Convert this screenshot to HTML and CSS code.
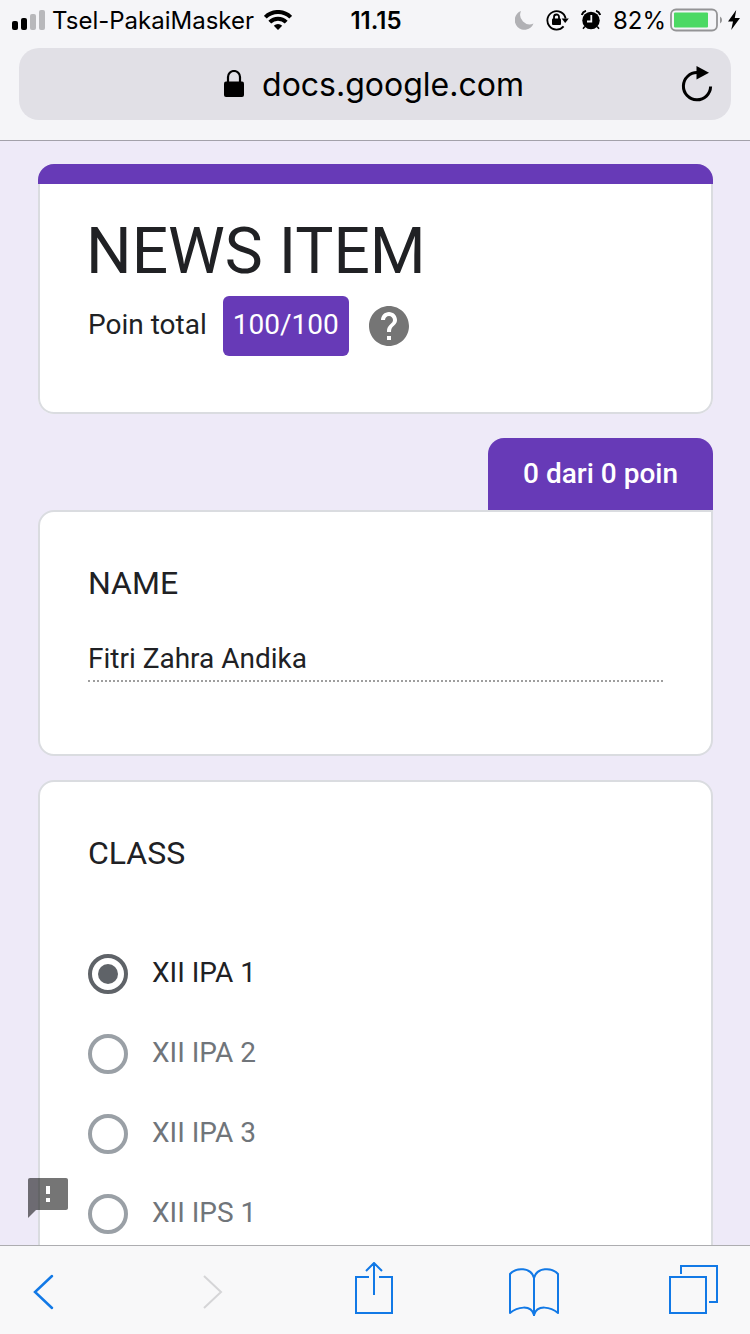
FILE: index.html
```html
<!DOCTYPE html>
<html lang="id">
<head>
    <meta charset="UTF-8">
    <meta name="viewport" content="width=device-width, initial-scale=1.0">
    <title>NEWS ITEM</title>
    <link rel="stylesheet" href="styles.css">
</head>
<body>

    <!-- Browser top bar -->
    <header class="browser-top">
        <div class="status-bar">
            <div class="status-left">
                <svg width="34" height="20" viewBox="0 0 34 20" aria-hidden="true">
                    <rect x="0" y="11" width="6" height="9" rx="2"/>
                    <rect x="9" y="8" width="6" height="12" rx="2"/>
                    <rect x="18" y="4" width="6" height="16" rx="2" fill="#b8b8bb"/>
                    <rect x="27" y="0" width="6" height="20" rx="2" fill="#b8b8bb"/>
                </svg>
                <span class="carrier">Tsel-PakaiMasker</span>
                <svg width="28" height="20" viewBox="0 0 28 20" fill="none" stroke="#000" stroke-width="4" aria-hidden="true">
                    <path d="M1.3 7.2a18 18 0 0 1 25.4 0"/>
                    <path d="M5.8 12.200a11.600 11.600 0 0 1 16.400 0"/>
                    <path d="M14 20l-4.2-4.2a6 6 0 0 1 8.4 0z" fill="#000" stroke="none"/>
                </svg>
            </div>
            <span class="clock">11.15</span>
            <div class="status-right">
                <svg width="19" height="20" viewBox="0 0 19 20" aria-hidden="true">
                    <path d="M6 1A9.7 9.7 0 1 0 18.5 13.5A9.5 9.5 0 0 1 6 1z" fill="#b1b1b5"/>
                </svg>
                <svg width="23" height="22" viewBox="0 0 23 22" fill="none" stroke="#000" stroke-width="1.8" aria-hidden="true">
                    <path d="M17.6 17.3A9.2 9.2 0 1 1 19.6 9.5"/>
                    <path d="M15.6 9.5h7.2l-3.6 4.6z" fill="#000" stroke="none"/>
                    <rect x="6" y="9.5" width="9" height="6.5" rx="1" fill="#000" stroke="none"/>
                    <path d="M8 10V8a2.5 2.5 0 0 1 5 0v2"/>
                </svg>
                <svg width="20" height="20" viewBox="0 0 20 20" aria-hidden="true">
                    <circle cx="10" cy="10.5" r="8.7"/>
                    <path d="M.8 5A6 6 0 0 1 5 .9M19.2 5A6 6 0 0 0 15 .9" fill="none" stroke="#000" stroke-width="2"/>
                    <path d="M3.800 16.500L2 18.800M16.200 16.500l1.800 2.300" stroke="#000" stroke-width="1.500"/>
                    <path d="M10.3 5v6.500H6" fill="none" stroke="#f5f5f8" stroke-width="1.800"/>
                </svg>
                <span class="percent">82%</span>
                <svg class="battery" width="54" height="24" viewBox="0 0 54 24" aria-hidden="true">
                    <rect x="1" y="1.5" width="46" height="21" rx="5" fill="none" stroke="#949496" stroke-width="1.8"/>
                    <rect x="4" y="4.5" width="34" height="15" rx="1" fill="#4cd964"/>
                    <path d="M50 8.5a4 4 0 0 1 0 7z" fill="#949496"/>
                </svg>
                <svg width="12" height="20" viewBox="0 0 12 20" aria-hidden="true">
                    <path d="M8.2 0L0 11.5h5L3.2 20 12 8H6.8z"/>
                </svg>
            </div>
        </div>
        <div class="address-bar">
            <a class="address" href="#">
                <svg width="20" height="28" viewBox="0 0 20 28" aria-hidden="true">
                    <rect x="0" y="11.5" width="20" height="15.5" rx="2"/>
                    <path d="M4 12.5V7a6 6 0 0 1 12 0v5.5" fill="none" stroke="#000" stroke-width="2.2"/>
                </svg>
                docs.google.com
            </a>
            <button class="reload" type="button" aria-label="Muat ulang">
                <svg width="32" height="36" viewBox="0 0 32 36" fill="none" aria-hidden="true">
                    <path d="M16.5 6.6A13.6 13.6 0 1 0 29.6 20.5" stroke="#000" stroke-width="3"/>
                    <path d="M15.5 0v13.500L28 6.800z" fill="#000"/>
                </svg>
            </button>
        </div>
    </header>

    <!-- Form -->
    <main class="form-page">
        <section class="card title-card">
            <h1>NEWS ITEM</h1>
            <div class="score">
                <span>Poin total</span>
                <span class="score-badge">100/100</span>
                <button class="help" type="button" aria-label="Bantuan">
                    <svg width="48" height="48" viewBox="0 0 24 24" aria-hidden="true">
                        <path fill="#757575" d="M12 2C6.48 2 2 6.48 2 12s4.48 10 10 10 10-4.480 10-10S17.520 2 12 2zm1 17h-2v-2h2v2zm2.070-7.750l-.9.920C13.450 12.900 13 13.500 13 15h-2v-.5c0-1.100.45-2.100 1.170-2.830l1.240-1.260c.37-.36.59-.86.59-1.410 0-1.100-.9-2-2-2s-2 .9-2 2H8c0-2.210 1.790-4 4-4s4 1.790 4 4c0 .88-.36 1.680-.93 2.250z"/>
                    </svg>
                </button>
            </div>
        </section>

        <div class="points-tab">0 dari 0 poin</div>
        <section class="card name-card">
            <h2><label for="name">NAME</label></h2>
            <input class="text-answer" id="name" type="text" value="Fitri Zahra Andika" readonly>
        </section>

        <section class="card class-card">
            <h2 id="class-title">CLASS</h2>
            <div class="options" role="radiogroup" aria-labelledby="class-title">
                <label class="option"><input type="radio" name="class" checked><span>XII IPA 1</span></label>
                <label class="option"><input type="radio" name="class"><span>XII IPA 2</span></label>
                <label class="option"><input type="radio" name="class"><span>XII IPA 3</span></label>
                <label class="option"><input type="radio" name="class"><span>XII IPS 1</span></label>
            </div>
        </section>

        <!-- Report a problem -->
        <button class="feedback" type="button" aria-label="Laporkan masalah">
            <svg width="48" height="48" viewBox="0 0 24 24" aria-hidden="true">
                <path d="M21 2H3c-.6 0-1 .4-1 1v19l4-4h15c.6 0 1-.4 1-1V3c0-.6-.4-1-1-1z" fill="#000" fill-opacity=".54"/>
                <path d="M11 6h2v4h-2zM11 12h2v2h-2z" fill="#fff"/>
            </svg>
        </button>
    </main>

    <!-- Browser toolbar -->
    <nav class="toolbar" aria-label="Browser">
        <button type="button" aria-label="Kembali">
            <svg width="52" height="56" viewBox="0 0 52 56"><path d="M35 14L18 30l17 16" stroke-width="2.500" stroke-linecap="round"/></svg>
        </button>
        <button class="inactive" type="button" aria-label="Maju">
            <svg width="52" height="56" viewBox="0 0 52 56"><path d="M18 14l17 16-17 16"/></svg>
        </button>
        <button type="button" aria-label="Bagikan">
            <svg width="52" height="56" viewBox="0 0 52 56"><path d="M21 15H8v36h36V15H31M26 33V1M18 9l8-8 8 8"/></svg>
        </button>
        <button type="button" aria-label="Bookmark">
            <svg width="52" height="56" viewBox="0 0 52 56"><path d="M26 54V16C23 5 8 5 2 12v39c7-6 21-9 24 2 3-11 17-8 24-2V12C44 5 29 5 26 16" stroke-linejoin="round"/></svg>
        </button>
        <button type="button" aria-label="Tab">
            <svg width="52" height="56" viewBox="0 0 52 56"><path d="M2 15h36v36H2zM13 12V4h36v36h-8"/></svg>
        </button>
    </nav>

</body>
</html>
```
FILE: styles.css
```css
* {
    box-sizing: border-box;
}
body {
    display: flex;
    flex-direction: column;
    height: 100vh;
    margin: 0;
    font-family: Roboto, sans-serif;
    font-size: 28px;
    color: #202124;
    background-color: #eeeaf8;
}
h1, h2 {
    margin: 0;
    font-weight: 400;
}
button {
    padding: 0;
    border: none;
    background: none;
    cursor: pointer;
}
svg {
    display: block;
    flex-shrink: 0;
}

/* Status bar and address bar */
.browser-top {
    flex-shrink: 0;
    padding-bottom: 20px;
    border-bottom: 1px solid #a3a1aa;
    background-color: #f5f5f8;
    color: #000;
    font-family: Inter, sans-serif;
}
.status-bar {
    display: grid;
    grid-template-columns: 1fr auto 1fr;
    align-items: center;
    height: 40px;
    margin-bottom: 8px;
    padding: 0 10px 0 12px;
    font-size: 24px;
}
.status-left, .status-right {
    display: flex;
    align-items: center;
}
.carrier {
    margin: 0 10px 0 6px;
}
.clock {
    font-weight: 600;
}
.status-right {
    justify-content: flex-end;
    gap: 12px;
}
.battery {
    margin: 0 -8px 0 -8px;
}
.address-bar {
    display: flex;
    align-items: center;
    height: 72px;
    margin: 0 19px;
    padding: 0 18px;
    border-radius: 20px;
    background-color: #e1e0e6;
}
.address {
    display: flex;
    flex: 1;
    align-items: center;
    justify-content: center;
    gap: 18px;
    padding-left: 30px;
    color: #000;
    font-size: 32px;
    text-decoration: none;
}

/* Form */
.form-page {
    position: relative;
    display: flex;
    flex: 1;
    flex-direction: column;
    min-height: 0;
    padding: 23px 37px 0 38px;
    overflow: hidden;
}
.card {
    flex-shrink: 0;
    padding: 0 48px;
    border: 2px solid #dadce0;
    border-radius: 16px;
    background-color: #fff;
}
.title-card {
    margin-bottom: 24px;
    padding: 0 0 58px;
    border: none;
    box-shadow: inset 0 0 0 2px #dadce0;
    overflow: hidden;
}
.title-card::before {
    content: "";
    display: block;
    height: 20px;
    margin-bottom: 28px;
    background-color: #673ab7;
}
.title-card h1 {
    padding: 0 48px;
    font-size: 64px;
    line-height: 80px;
}
.score {
    display: flex;
    align-items: flex-start;
    margin-top: 4px;
    padding: 0 50px;
    line-height: 58px;
}
.score-badge {
    height: 60px;
    margin: 0 16px;
    padding: 0 10px;
    border-radius: 6px;
    background-color: #673ab7;
    color: #fff;
}
.help {
    align-self: center;
}
.points-tab {
    flex-shrink: 0;
    align-self: flex-end;
    padding: 0 35px;
    border-radius: 16px 16px 0 0;
    background-color: #673ab7;
    color: #fff;
    font-weight: 500;
    line-height: 72px;
}
.name-card {
    margin-bottom: 24px;
    padding-top: 51px;
    padding-bottom: 72px;
    border-top-right-radius: 0;
}
.card h2 {
    font-size: 32px;
    line-height: 40px;
}
.text-answer {
    display: block;
    width: 100%;
    height: 45px;
    margin-top: 34px;
    padding: 0;
    border: none;
    border-bottom: 2px dotted #9e9e9e;
    background: none;
    color: #202124;
    font: inherit;
}
.class-card {
    padding-top: 51px;
    padding-bottom: 72px;
}
.options {
    padding-top: 61px;
}
.option {
    display: flex;
    align-items: center;
    gap: 24px;
    height: 80px;
    color: #70757a;
}
.option input {
    display: grid;
    place-items: center;
    width: 40px;
    height: 40px;
    margin: 0;
    border: 4px solid #9aa0a6;
    border-radius: 50%;
    appearance: none;
}
.option input:checked {
    border-color: #5f6368;
}
.option input:checked::before {
    content: "";
    width: 20px;
    height: 20px;
    border-radius: 50%;
    background-color: #5f6368;
}
.option input:checked + span {
    color: #202124;
}
.option span {
    padding-bottom: 4px;
}
.feedback {
    position: absolute;
    bottom: 23px;
    left: 24px;
}

/* Toolbar */
.toolbar {
    display: grid;
    grid-template-columns: 169fr 162fr 160fr 160fr 52px;
    flex-shrink: 0;
    align-items: center;
    justify-items: start;
    height: 89px;
    padding: 0 30px 0 17px;
    border-top: 1px solid #adadb0;
    background-color: #f8f8f9;
}
.toolbar svg {
    fill: none;
    stroke: #1279e6;
    stroke-width: 2;
}
.toolbar .inactive svg {
    stroke: #d5d5d7;
}
```
